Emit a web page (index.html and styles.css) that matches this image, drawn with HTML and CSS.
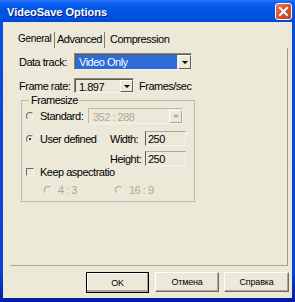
FILE: index.html
```html
<!DOCTYPE html>
<html>
<head>
<meta charset="utf-8">
<link rel="stylesheet" href="styles.css">
</head>
<body>
<div class="window">
  <div class="titlebar">
    <span class="title">VideoSave Options</span>
    <span class="close"><svg width="15" height="15" viewBox="0 0 15 15"><path d="M4 4 L11 11 M11 4 L4 11" stroke="#fff" stroke-width="2" stroke-linecap="square"/></svg></span>
  </div>
  <div class="client">
    <div class="tabs">
      <span class="tab tab-general">General</span>
      <span class="sep"></span>
      <span class="tab tab-adv">Advanced</span>
      <span class="sep"></span>
      <span class="tab tab-comp">Compression</span>
    </div>
    <div class="panel">
      <div class="row row-track">
        <span class="lbl lbl-main">Data track:</span>
        <div class="combo combo-track"><span class="val sel">Video Only</span><span class="dd"><i class="tri"></i></span></div>
      </div>
      <div class="row row-rate">
        <span class="lbl lbl-main">Frame rate:</span>
        <div class="combo combo-rate"><span class="val">1.897</span><span class="dd"><i class="tri"></i></span></div>
        <span class="lbl lbl-unit">Frames/sec</span>
      </div>
      <div class="group">
        <span class="legend">Framesize</span>
        <div class="grow grow-std">
          <span class="radio"></span>
          <span class="lbl lbl-std">Standard:</span>
          <div class="combo combo-std disabled"><span class="val">352 : 288</span><span class="dd"><i class="tri"></i></span></div>
        </div>
        <div class="grow grow-user">
          <span class="radio checked"></span>
          <span class="lbl lbl-user">User defined</span>
          <span class="lbl lbl-dim">Width:</span>
          <span class="edit">250</span>
        </div>
        <div class="grow grow-h">
          <span class="lbl lbl-dim lbl-h">Height:</span>
          <span class="edit">250</span>
        </div>
        <div class="grow grow-keep">
          <span class="check"></span>
          <span class="lbl">Keep aspectratio</span>
        </div>
        <div class="grow grow-ratio">
          <span class="ratio ratio-43"><span class="radio dis"></span><span class="lbl gray">4 : 3</span></span>
          <span class="ratio"><span class="radio dis"></span><span class="lbl gray">16 : 9</span></span>
        </div>
      </div>
    </div>
    <div class="buttons">
      <span class="btn btn-ok">OK</span>
      <span class="btn btn-cancel">Отмена</span>
      <span class="btn btn-help">Справка</span>
    </div>
  </div>
</div>
</body>
</html>
```
FILE: styles.css
```css
html, body { margin: 0; padding: 0; }
body { font-family: "Liberation Sans", Arial, sans-serif; background: #fff; }

.window {
  width: 295px; height: 302px;
  background: linear-gradient(#0a4ee0, #0842d6 90%, #001ea0);
  display: flex; flex-direction: column;
}
.titlebar {
  height: 22px; flex: none;
  display: flex; align-items: center; justify-content: space-between;
  padding: 0 3px 0 7px;
  background: linear-gradient(#2a76f6 0%, #0a5ef0 15%, #0055e5 50%, #0050de 85%, #0046cf 100%);
}
.title {
  color: #fff; font-weight: bold; font-size: 11px; line-height: 12px;
  text-shadow: 1px 1px 0 #0a1e80; margin-top: 2px;
}
.close {
  width: 17px; height: 17px; box-sizing: border-box;
  border: 1px solid #fff; border-radius: 3px;
  background: linear-gradient(135deg, #e8805e, #d9512c 50%, #c2401f);
  display: flex; align-items: center; justify-content: center;
  margin-top: 1px;
}

.client {
  flex: 1; margin: 0 3px 4px 3px;
  background: #ece9d8;
  display: flex; flex-direction: column;
}

.tabs {
  margin-top: 10px; height: 16px; flex: none;
  display: flex; align-items: flex-start;
  padding-left: 15px;
}
.tab { font-size: 11px; line-height: 12px; letter-spacing: -0.5px; color: #000; padding-top: 1px; }
.tab-general { width: 36px; font-size: 10px; letter-spacing: -0.3px; }
.tab-adv { width: 47px; margin-left: 2px; }
.tab-comp { margin-left: 5px; }
.sep { width: 1px; height: 16px; background: #7e7d70; }

.panel {
  margin-left: 7px; width: 278px; height: 218px; flex: none;
  box-sizing: border-box;
  border-right: 1px solid #9c9a8c; border-bottom: 1px solid #aca899;
  padding: 5px 0 0 9px;
}

.lbl { font-size: 11px; line-height: 12px; letter-spacing: -0.5px; color: #000; white-space: nowrap; }
.gray { color: #aca899; }

.row { display: flex; align-items: center; }
.row-track { height: 17px; }
.row-rate { height: 15px; margin-top: 8px; }
.lbl-main { width: 55px; }
.lbl-unit { margin-left: 5px; }

.combo {
  box-sizing: border-box; display: flex; align-items: stretch;
  border: 1px solid; border-color: #8a8878 #f4f3ee #f4f3ee #8a8878;
  box-shadow: inset 1px 1px 0 #5e5c50;
  background: #ece9d8;
}
.combo-track { width: 118px; height: 17px; }
.combo-rate { width: 60px; height: 15px; }
.combo .val {
  flex: 1; font-size: 11px; line-height: 12px; letter-spacing: -0.5px;
  padding: 1px 0 0 3px; margin: 1px 1px 0 1px; white-space: nowrap;
}
.combo .val.sel { background: #2c6bd8; color: #fff; margin: 1px 1px 0 1px; padding-top: 1px; }
.dd {
  width: 13px; flex: none; box-sizing: border-box;
  border: 1px solid; border-color: #fff #5e5c50 #5e5c50 #fff;
  background: #ece9d8;
  display: flex; align-items: center; justify-content: center;
  margin: 1px 0 0 0;
}
.tri { width: 0; height: 0; border-left: 3px solid transparent; border-right: 3px solid transparent; border-top: 3px solid #000; }

.group {
  position: relative;
  margin: 7px 0 0 2px; width: 174px; height: 102px; box-sizing: border-box;
  border: 1px solid #bcbaac;
  padding-left: 4px;
}
.legend {
  position: absolute; top: -7px; left: 7px;
  padding: 0 2px; background: #ece9d8;
  font-size: 11px; line-height: 12px; letter-spacing: -0.5px;
}
.grow { display: flex; align-items: center; }
.grow-std { margin-top: 7px; height: 16px; }
.grow-user { margin-top: 7px; height: 15px; }
.grow-h { margin-top: 5px; height: 15px; }
.grow-keep { margin-top: 0; height: 11px; }
.grow-ratio { margin-top: 7px; height: 12px; padding-left: 18px; }

.radio {
  width: 8px; height: 8px; box-sizing: border-box; flex: none;
  border-radius: 50%;
  border: 1px solid; border-color: #6e6c60 #f4f3ee #f4f3ee #6e6c60;
  background: #ece9d8; margin-right: 6px;
  display: flex; align-items: center; justify-content: center;
}
.radio.checked::after { content: ""; width: 2px; height: 2px; border-radius: 50%; background: #000; }
.radio.dis { border-color: #aca899 #f4f3ee #f4f3ee #aca899; }

.check {
  width: 8px; height: 8px; box-sizing: border-box; flex: none;
  border: 1px solid; border-color: #6e6c60 #f4f3ee #f4f3ee #6e6c60;
  margin-right: 6px;
}

.lbl-std { width: 48px; }
.lbl-user { width: 70px; }
.lbl-dim { width: 35px; }
.lbl-h { margin-left: 84px; }

.combo-std { width: 95px; height: 16px; border-color: #bcbaac #f4f3ee #f4f3ee #bcbaac; box-shadow: none; }
.combo-std .val { color: #aca899; }
.combo-std .dd { border-color: #fff #aca899 #aca899 #fff; }
.combo-std .tri { border-top-color: #aca899; }

.edit {
  width: 41px; height: 15px; box-sizing: border-box;
  border: 1px solid; border-color: #aca899 #f4f3ee #f4f3ee #5e5c50;
  font-size: 11px; line-height: 12px; letter-spacing: -0.5px;
  padding: 1px 0 0 2px;
}

.ratio { display: flex; align-items: center; }
.ratio-43 { width: 71px; }

.buttons {
  margin-top: 6px; height: 20px; flex: none;
  display: flex; justify-content: flex-end; padding-right: 3px;
}
.btn {
  box-sizing: border-box; height: 20px;
  display: flex; align-items: center; justify-content: center;
  font-size: 9px; letter-spacing: -0.2px; color: #000;
  border: 1px solid; border-color: #fff #716f64 #716f64 #fff;
  box-shadow: inset -1px -1px 0 #aca899;
  background: #ece9d8;
}
.btn-ok { width: 63px; border-color: #000; box-shadow: inset -1px -2px 0 #aca899, inset 1px 1px 0 #fff; height: 21px; }
.btn-cancel { width: 64px; margin-left: 6px; }
.btn-help { width: 65px; margin-left: 5px; }
```
